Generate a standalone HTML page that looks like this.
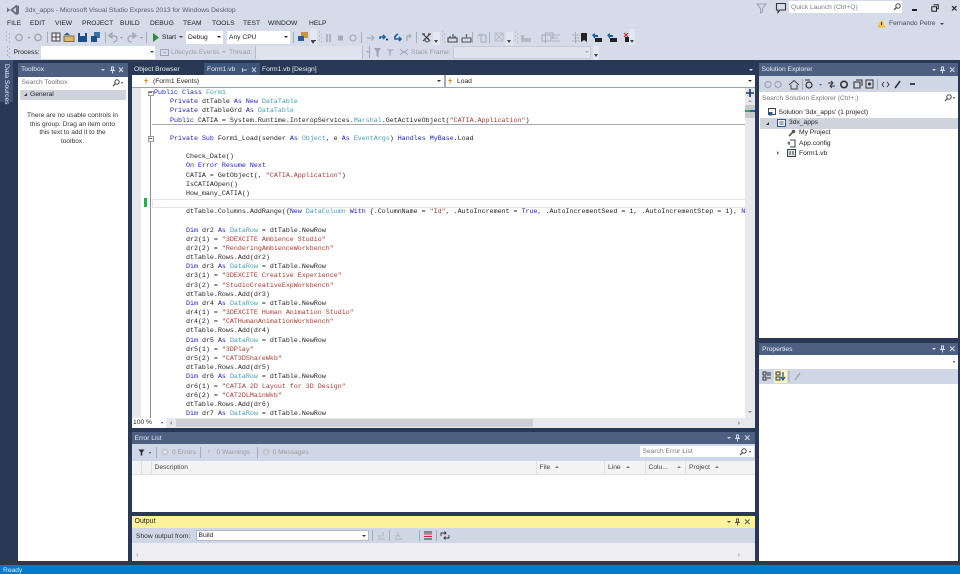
<!DOCTYPE html>
<html><head><meta charset="utf-8"><style>
html,body{margin:0;padding:0;width:960px;height:574px;overflow:hidden;background:#293955}
body{position:relative;font-family:"Liberation Sans",sans-serif;font-size:6.7px;color:#1e1e1e;filter:blur(.3px)}
div,svg{position:absolute}
.t{white-space:nowrap;line-height:10px;margin-top:1px}
.d{margin-top:2px}
.g{color:#9a9ca0}
.h{background:#4d6082}
.w{color:#e8edf5}
.tb{background:#cfd6e5}
.bl{background:#fff}
pre{position:absolute;margin:0;font-family:"Liberation Mono",monospace;font-size:6.67px;line-height:9.17px;color:#222}
pre b{font-weight:normal;color:#1a1acc}
pre i{font-style:normal;color:#3f9fb5}
pre u{text-decoration:none;color:#a83a32}
.sep{width:1px;background:#a5adbd}
</style></head><body>
<!-- top chrome -->
<div style="left:0;top:0;width:960px;height:60px;background:#d6dbe9"></div>
<svg style="left:6px;top:4px" width="14" height="12" viewBox="0 0 14 12"><path d="M1 3.5 L4 6 L1 8.5 Z M10 1 L13 2 V10 L10 11 L4 6 Z M10 3.5 L7 6 L10 8.5 Z" fill="#68707e" fill-rule="evenodd"/></svg>
<div class="t" style="left:25px;top:5px;color:#555b66;font-size:6.7px">3dx_apps - Microsoft Visual Studio Express 2013 for Windows Desktop</div>
<div class="t" style="left:7px;top:18px">FILE</div>
<div class="t" style="left:30px;top:18px">EDIT</div>
<div class="t" style="left:55px;top:18px">VIEW</div>
<div class="t" style="left:82px;top:18px">PROJECT</div>
<div class="t" style="left:120px;top:18px">BUILD</div>
<div class="t" style="left:150px;top:18px">DEBUG</div>
<div class="t" style="left:183px;top:18px">TEAM</div>
<div class="t" style="left:212px;top:18px">TOOLS</div>
<div class="t" style="left:243px;top:18px">TEST</div>
<div class="t" style="left:268px;top:18px">WINDOW</div>
<div class="t" style="left:309px;top:18px">HELP</div>
<!-- quick launch -->
<svg style="left:756px;top:3px" width="12" height="11" viewBox="0 0 12 11"><path d="M1 1H10L6.5 5.5V9L4.5 10V5.5Z" fill="none" stroke="#9aa0ac"/></svg>
<svg style="left:775px;top:2px" width="12" height="12" viewBox="0 0 12 12"><path d="M1.5 1.5H10.5V8H5L3 10.5V8H1.5Z" fill="none" stroke="#33383f" stroke-width="1.1"/></svg>
<div class="bl" style="left:789px;top:1px;width:113px;height:12px"></div>
<div class="t g" style="left:791px;top:2px;color:#7c8088">Quick Launch (Ctrl+Q)</div>
<svg style="left:893px;top:3px" width="8" height="8" viewBox="0 0 8 8"><circle cx="5" cy="3" r="2.2" fill="none" stroke="#444"/><path d="M3.4 4.6L1 7" stroke="#444" stroke-width="1.2"/></svg>
<div style="left:912px;top:9px;width:5px;height:1.5px;background:#222"></div>
<svg style="left:931px;top:4px" width="8" height="8" viewBox="0 0 8 8"><path d="M2.5.8H7.2V4.8H5.5M.8 2.8H5.5V7.2H.8Z" fill="none" stroke="#222"/></svg>
<svg style="left:951px;top:5px" width="7" height="7" viewBox="0 0 7 7"><path d="M1 1L5.5 5.5M5.5 1L1 5.5" stroke="#222" stroke-width="1.2"/></svg>
<svg style="left:877px;top:19px" width="9" height="9" viewBox="0 0 9 9"><path d="M4.5 .5L8.7 8.5H.3Z" fill="#f2c230"/><path d="M4.5 3V6" stroke="#333"/></svg>
<div class="t" style="left:889px;top:18px;color:#444a55">Fernando Petre</div>
<div style="left:940px;top:23px;border:2px solid transparent;border-top:2.5px solid #444"></div>

<!-- toolbar row 1 -->
<svg style="left:5px;top:31px" width="6" height="13" viewBox="0 0 6 13"><path d="M1 1h1M4 3h1M1 5h1M4 7h1M1 9h1M4 11h1" stroke="#8a90a0"/></svg>
<svg style="left:14px;top:32px" width="30" height="11" viewBox="0 0 30 11"><circle cx="5" cy="5.5" r="3.2" fill="none" stroke="#a3a8b2" stroke-width="1.4"/><circle cx="24" cy="5.5" r="3.2" fill="none" stroke="#a3a8b2" stroke-width="1.4"/><path d="M13.5 5h3l-1.5 1.8Z" fill="#999"/></svg>
<div class="sep" style="left:47px;top:32px;height:11px"></div>
<svg style="left:51px;top:31px" width="50" height="12" viewBox="0 0 50 12"><rect x="1" y="2" width="8" height="8" fill="#eee" stroke="#444"/><path d="M5 2V10M1 6H9" stroke="#444"/><path d="M13 5H23V10.5H13Z" fill="#dcb67a" stroke="#8a6a30"/><path d="M16 1.5L19 4H13Z" fill="#1e5f9e"/><path d="M27 2H36V11H27Z" fill="#1e4f8a"/><rect x="29" y="2" width="5" height="3" fill="#dde"/><path d="M40 5H46V11H40Z" fill="#1e4f8a"/><path d="M43 1H49V7H46V5H43Z" fill="#3a6fa8"/></svg>
<div class="sep" style="left:105px;top:32px;height:11px"></div>
<svg style="left:107px;top:32px" width="38" height="11" viewBox="0 0 38 11"><path d="M2 3L5 1V6L2 4H7Q10 4 10 7T6 10" fill="none" stroke="#9ea4b0" stroke-width="1.2"/><path d="M13 5h3l-1.5 1.8Z" fill="#999"/><path d="M29 3L26 1V6L29 4H24Q21 4 21 7T25 10" fill="none" stroke="#9ea4b0" stroke-width="1.2"/><path d="M33 5h3l-1.5 1.8Z" fill="#999"/></svg>
<div class="sep" style="left:146px;top:32px;height:11px"></div>
<svg style="left:153px;top:33px" width="6" height="9" viewBox="0 0 6 9"><path d="M0 0L6 4.5L0 9Z" fill="#2e8b3c"/></svg>
<div class="t" style="left:162px;top:32px">Start</div>
<div style="left:179px;top:36px;border:2px solid transparent;border-top:2.5px solid #444"></div>
<div class="bl" style="left:186px;top:31px;width:37px;height:13px"></div>
<div class="t" style="left:188px;top:32px">Debug</div>
<div style="left:217px;top:36px;border:2px solid transparent;border-top:2.5px solid #222"></div>
<div class="bl" style="left:227px;top:31px;width:63px;height:13px"></div>
<div class="t" style="left:229px;top:32px">Any CPU</div>
<div style="left:284px;top:36px;border:2px solid transparent;border-top:2.5px solid #222"></div>
<div class="sep" style="left:293px;top:32px;height:11px"></div>
<svg style="left:297px;top:31px" width="12" height="12" viewBox="0 0 12 12"><rect x="4" y="1" width="7" height="6" fill="#c8923a"/><rect x="1" y="5" width="6" height="5" fill="#2a5a9a"/></svg>
<div style="left:310px;top:29px;width:7px;height:16px;background:#e4e7f0"></div>
<div style="left:311px;top:40px;width:5px;height:1px;background:#444"></div><div style="left:311px;top:41px;border:2.5px solid transparent;border-top:3px solid #444"></div>
<svg style="left:318px;top:31px" width="5" height="13" viewBox="0 0 5 13"><path d="M1 1h1M3 3h1M1 5h1M3 7h1M1 9h1M3 11h1" stroke="#a0a5b2"/></svg>
<svg style="left:325px;top:33px" width="56" height="10" viewBox="0 0 56 10"><path d="M2 1V9M5 1V9" stroke="#a6abb7" stroke-width="1.6"/><rect x="13" y="2.5" width="5" height="5" fill="#a6abb7"/><circle cx="28" cy="5" r="3" fill="none" stroke="#a6abb7" stroke-width="1.2"/></svg>
<div class="sep" style="left:361px;top:32px;height:11px"></div>
<svg style="left:366px;top:32px" width="46" height="12" viewBox="0 0 46 12"><path d="M1 6H8M5.5 3.5L8 6L5.5 8.5" fill="none" stroke="#a6abb7" stroke-width="1.2"/><path d="M14 7V5H19M17 3L19 5L17 7" fill="none" stroke="#1e5f9e" stroke-width="1.6"/><circle cx="21" cy="7.5" r="1" fill="#222"/><path d="M32 2Q28 4 29 7H35M33 5L35 7L33 9" fill="none" stroke="#1e5f9e" stroke-width="1.6"/><path d="M41 9V4H45M43 2L45 4L43 6" fill="none" stroke="#a6abb7" stroke-width="1.2"/></svg>
<div class="sep" style="left:416px;top:32px;height:11px"></div>
<svg style="left:421px;top:32px" width="11" height="11" viewBox="0 0 11 11"><path d="M1 2H4M7 2H10M2 2L9 9M9 2L2 9" stroke="#444" stroke-width="1.2"/><circle cx="6" cy="8" r="2" fill="none" stroke="#444"/></svg>
<div style="left:433px;top:32px;width:7px;height:13px;background:#e4e7f0"></div><div style="left:434px;top:40px;border:2.5px solid transparent;border-top:3px solid #444"></div>
<svg style="left:441px;top:31px" width="5" height="13" viewBox="0 0 5 13"><path d="M1 1h1M3 3h1M1 5h1M3 7h1M1 9h1M3 11h1" stroke="#a0a5b2"/></svg>
<svg style="left:447px;top:32px" width="26" height="11" viewBox="0 0 26 11"><path d="M1 10V6H10V10ZM3 6V4M6 6V2M8 6V4" fill="none" stroke="#444" stroke-width="1.1"/><path d="M15 10V6H24V10ZM19.5 6V2" fill="none" stroke="#555" stroke-width="1.1"/></svg>
<div class="sep" style="left:472px;top:32px;height:11px"></div>
<svg style="left:477px;top:32px" width="11" height="11" viewBox="0 0 11 11"><path d="M4 3H9V10H4ZM1 4L3 2L5 4" fill="none" stroke="#a6abb7"/></svg>
<div class="sep" style="left:489px;top:32px;height:11px"></div>
<svg style="left:494px;top:32px" width="11" height="11" viewBox="0 0 11 11"><path d="M1 1H9V9H1ZM1 1L9 9M9 1L1 9" fill="none" stroke="#b5b9c4"/></svg>
<div style="left:506px;top:32px;width:7px;height:13px;background:#e4e7f0"></div><div style="left:507px;top:40px;border:2.5px solid transparent;border-top:3px solid #444"></div>
<svg style="left:514px;top:31px" width="5" height="13" viewBox="0 0 5 13"><path d="M1 1h1M3 3h1M1 5h1M3 7h1M1 9h1M3 11h1" stroke="#a0a5b2"/></svg>
<svg style="left:520px;top:32px" width="42" height="11" viewBox="0 0 42 11"><path d="M1 3H4V10H1ZM4 6H11V10H4Z" fill="#b4bac6"/><path d="M22 3H31V9H22ZM25 1H33V7" fill="none" stroke="#a6abb7"/></svg>
<div class="sep" style="left:545px;top:32px;height:11px"></div>
<svg style="left:550px;top:32px" width="32" height="11" viewBox="0 0 32 11"><path d="M2 3H10M2 6H8M2 9H10M22 3H30M24 6H30M22 9H30" stroke="#b0b5c0"/></svg>
<div class="sep" style="left:575px;top:32px;height:11px"></div>
<svg style="left:580px;top:32px" width="60" height="11" viewBox="0 0 60 11"><path d="M1 1H7V10L4 8L1 10Z" fill="#222"/><path d="M15 6H22V10H15Z" fill="#222"/><path d="M12 3L15 1V3H18V5H15V7Z" fill="#1e5f9e"/><path d="M30 6H37V10H30Z" fill="#222"/><path d="M27 3L30 1V3H33V5H30V7Z" fill="#1e5f9e"/><path d="M45 5H52V10H45Z" fill="#222"/><path d="M44 1L48 5M48 1L44 5" stroke="#c0302a" stroke-width="1.2"/></svg>
<div style="left:629px;top:29px;width:6px;height:16px;background:#e4e7f0"></div><div style="left:630px;top:40px;border:2.5px solid transparent;border-top:3px solid #444"></div>

<!-- toolbar row 2 -->
<svg style="left:6px;top:46px" width="5" height="13" viewBox="0 0 5 13"><path d="M1 1h1M3 3h1M1 5h1M3 7h1M1 9h1M3 11h1" stroke="#8a90a0"/></svg>
<div class="t d" style="left:13.5px;top:46px">Process:</div>
<div class="bl" style="left:41px;top:46px;width:114px;height:13px"></div>
<div style="left:150px;top:51px;border:2px solid transparent;border-top:2.5px solid #444"></div>
<svg style="left:160px;top:48px" width="9" height="9" viewBox="0 0 9 9"><path d="M.5 1.5H8.5V7.5H.5ZM3 4.5H6" fill="none" stroke="#9ea4b0"/></svg>
<div class="t d g" style="left:171px;top:46px">Lifecycle Events</div>
<div style="left:222px;top:51px;border:2px solid transparent;border-top:2.5px solid #a6abb7"></div>
<div class="t d g" style="left:229px;top:46px">Thread:</div>
<div style="left:255px;top:46px;width:108px;height:13px;background:#dfe3ed;border-left:1px solid #b6bcc9;border-right:1px solid #b6bcc9;box-sizing:border-box"></div>
<div style="left:366px;top:51px;border:2px solid transparent;border-top:2.5px solid #a6abb7"></div>
<div class="sep" style="left:369px;top:46px;height:12px"></div>
<svg style="left:373px;top:47px" width="40" height="11" viewBox="0 0 40 11"><path d="M1 1H8L5.5 5V10L3.5 9V5Z" fill="#9ea4b0"/><path d="M14 2H21L18 5V8L16 9V5Z" fill="#b5bac5"/><path d="M27 2L31 6L35 2M27 8L31 4L35 8" fill="none" stroke="#a6abb7"/></svg>
<div class="t d g" style="left:411px;top:46px">Stack Frame:</div>
<div style="left:453px;top:46px;width:138px;height:13px;background:#dfe3ed;border:1px solid #c6cbd6;box-sizing:border-box"></div>
<div style="left:585px;top:51px;border:2px solid transparent;border-top:2.5px solid #a6abb7"></div>
<div style="left:593px;top:46px;width:6px;height:14px;background:#e4e7f0"></div><div style="left:594px;top:54px;border:2.5px solid transparent;border-top:3px solid #444"></div>

<!-- left tab -->
<div style="left:0;top:60px;width:13px;height:42px;background:#3e5072"></div>
<div class="w" style="left:3px;top:64px;white-space:nowrap;writing-mode:vertical-rl;font-size:6.7px;line-height:7px">Data Sources</div>

<!-- Toolbox -->
<div class="bl" style="left:18px;top:63px;width:109.5px;height:498px"></div>
<div class="h" style="left:18px;top:63px;width:109.5px;height:14px"></div>
<div class="t w" style="left:21px;top:64px">Toolbox</div>
<div style="left:101px;top:69px;border:2px solid transparent;border-top:2.5px solid #d4dbe8"></div>
<svg style="left:109px;top:66px" width="16" height="8" viewBox="0 0 16 8"><path d="M2 1H5M2.5 1V4H4.5V1M1 4.5H6M3.5 4.5V7.5M10 1.5L14 6M14 1.5L10 6" fill="none" stroke="#d4dbe8"/></svg>
<div class="t g" style="left:21.5px;top:77px;color:#777">Search Toolbox</div>
<svg style="left:112px;top:79px" width="8" height="8" viewBox="0 0 8 8"><circle cx="5" cy="3" r="2.2" fill="none" stroke="#444"/><path d="M3.4 4.6L1 7" stroke="#444" stroke-width="1.2"/></svg>
<div style="left:121px;top:82px;border:1.5px solid transparent;border-top:2px solid #444"></div>
<div style="left:20px;top:90px;width:106px;height:10px;background:#cfd3de"></div>
<div style="left:24px;top:93px;border-left:3px solid transparent;border-bottom:3px solid #333"></div>
<div class="t" style="left:30px;top:89px">General</div>
<div style="left:18px;top:112px;width:109px;text-align:center;line-height:8.7px;color:#333;font-size:6.6px;white-space:nowrap">There are no usable controls in<br>this group. Drag an item onto<br>this text to add it to the<br>toolbox.</div>

<!-- Editor -->
<div class="t w" style="left:134px;top:64px">Object Browser</div>
<div style="left:204px;top:63px;width:56px;height:13px;background:#3e5578"></div>
<div class="t w" style="left:207px;top:64px">Form1.vb</div>
<svg style="left:240px;top:66px" width="18" height="8" viewBox="0 0 18 8"><path d="M2 4H7M2.5 2V6M12 1.5L16 6M16 1.5L12 6" fill="none" stroke="#c5cedd"/></svg>
<div class="t w" style="left:262px;top:64px">Form1.vb [Design]</div>
<div style="left:749px;top:69px;border:2px solid transparent;border-top:2.5px solid #d4dbe8"></div>
<div class="bl" style="left:132px;top:75px;width:623px;height:343px"></div>
<div style="left:132px;top:87px;width:623px;height:1px;background:#9aa3b3"></div>
<div style="left:444px;top:75px;width:2px;height:13px;background:#a4abb9"></div>
<svg style="left:143px;top:77px" width="6" height="8" viewBox="0 0 6 8"><path d="M4 0L1 4H3L2 8L5 3H3Z" fill="#d98a1e"/></svg>
<div class="t" style="left:153px;top:76px">(Form1 Events)</div>
<div style="left:437px;top:80px;border:2px solid transparent;border-top:2.5px solid #333"></div>
<svg style="left:447px;top:77px" width="6" height="8" viewBox="0 0 6 8"><path d="M4 0L1 4H3L2 8L5 3H3Z" fill="#d98a1e"/></svg>
<div class="t" style="left:457px;top:76px">Load</div>
<div style="left:748px;top:80px;border:2px solid transparent;border-top:2.5px solid #333"></div>
<div style="left:132px;top:88px;width:9px;height:330px;background:#e6e7e8"></div>
<div style="left:143.5px;top:198px;width:3px;height:9px;background:#22b14c"></div>
<div style="left:150px;top:95px;width:1px;height:323px;background:#8c8c8c"></div>
<div style="left:148px;top:90.5px;width:3.5px;height:3.5px;border:1px solid #999;background:#fff"></div>
<div style="left:149px;top:92px;width:3px;height:1px;background:#666"></div>
<div style="left:148px;top:136px;width:3.5px;height:3.5px;border:1px solid #999;background:#fff"></div>
<div style="left:149px;top:138px;width:3px;height:1px;background:#666"></div>
<div style="left:152px;top:123.5px;width:593px;height:1px;background:#aaa"></div>
<div style="left:152px;top:199px;width:593px;height:7px;border:1px solid #e6e6e6"></div>
<pre style="left:154px;top:89px;width:591px;height:329px;overflow:hidden"><b>Public Class</b> <i>Form1</i>
    <b>Private</b> dtTable <b>As New</b> <i>DataTable</i>
    <b>Private</b> dtTableGrd <b>As</b> <i>DataTable</i>
    <b>Public</b> CATIA = System.Runtime.InteropServices.<i>Marshal</i>.GetActiveObject(<u>"CATIA.Application"</u>)

    <b>Private Sub</b> Form1_Load(sender <b>As</b> <i>Object</i>, e <b>As</b> <i>EventArgs</i>) <b>Handles MyBase</b>.Load

        Check_Date()
        <b>On Error Resume Next</b>
        CATIA = GetObject(, <u>"CATIA.Application"</u>)
        IsCATIAOpen()
        How_many_CATIA()

        dtTable.Columns.AddRange({<b>New</b> <i>DataColumn</i> <b>With</b> {.ColumnName = <u>"Id"</u>, .AutoIncrement = <b>True</b>, .AutoIncrementSeed = 1, .AutoIncrementStep = 1}, <b>New</b> <i>DataColumn</i>})

        <b>Dim</b> dr2 <b>As</b> <i>DataRow</i> = dtTable.NewRow
        dr2(1) = <u>"3DEXCITE Ambience Studio"</u>
        dr2(2) = <u>"RenderingAmbienceWorkbench"</u>
        dtTable.Rows.Add(dr2)
        <b>Dim</b> dr3 <b>As</b> <i>DataRow</i> = dtTable.NewRow
        dr3(1) = <u>"3DEXCITE Creative Experience"</u>
        dr3(2) = <u>"StudioCreativeExpWorkbench"</u>
        dtTable.Rows.Add(dr3)
        <b>Dim</b> dr4 <b>As</b> <i>DataRow</i> = dtTable.NewRow
        dr4(1) = <u>"3DEXCITE Human Animation Studio"</u>
        dr4(2) = <u>"CATHumanAnimationWorkbench"</u>
        dtTable.Rows.Add(dr4)
        <b>Dim</b> dr5 <b>As</b> <i>DataRow</i> = dtTable.NewRow
        dr5(1) = <u>"3DPlay"</u>
        dr5(2) = <u>"CAT3DShareWkb"</u>
        dtTable.Rows.Add(dr5)
        <b>Dim</b> dr6 <b>As</b> <i>DataRow</i> = dtTable.NewRow
        dr6(1) = <u>"CATIA 2D Layout for 3D Design"</u>
        dr6(2) = <u>"CAT2DLMainWkb"</u>
        dtTable.Rows.Add(dr6)
        <b>Dim</b> dr7 <b>As</b> <i>DataRow</i> = dtTable.NewRow</pre>
<!-- vscroll -->
<div style="left:745px;top:88px;width:10px;height:330px;background:#e8e8ec"></div>
<div style="left:745px;top:88px;width:10px;height:9px;background:#dfe3ec"></div>
<svg style="left:746px;top:89px" width="8" height="8" viewBox="0 0 8 8"><path d="M4 0V8M0 4H8" stroke="#1a3a6e" stroke-width="1.6"/></svg>
<div style="left:748px;top:100px;border:2px solid transparent;border-top:0;border-bottom:2.5px solid #999"></div>
<div style="left:745px;top:105px;width:10px;height:13px;background:#c8c8cc"></div>
<div style="left:745px;top:110px;width:5px;height:1.5px;background:#22b14c"></div>
<div style="left:750px;top:110px;width:5px;height:1.5px;background:#2a5fb0"></div>
<div style="left:748px;top:411px;border:2px solid transparent;border-bottom:0;border-top:2.5px solid #888"></div>
<!-- hscroll -->
<div style="left:132px;top:418px;width:623px;height:10px;background:#e8e8ec"></div>
<div class="bl" style="left:132px;top:418px;width:34px;height:10px"></div>
<div class="t" style="left:133px;top:417px">100 %</div>
<div style="left:161px;top:422px;border:1.5px solid transparent;border-top:2.5px solid #444"></div>
<div style="left:170px;top:421px;border:2px solid transparent;border-left:0;border-right:2.5px solid #999"></div>
<div style="left:176px;top:419px;width:357px;height:8px;background:#d0d0d4"></div>
<div style="left:738px;top:421px;border:2px solid transparent;border-right:0;border-left:2.5px solid #999"></div>

<!-- Error list -->
<div class="h" style="left:132px;top:432px;width:623px;height:12px"></div>
<div class="t d w" style="left:134.5px;top:432px">Error List</div>
<div style="left:727px;top:437px;border:2px solid transparent;border-top:2.5px solid #d4dbe8"></div>
<svg style="left:734px;top:434px" width="18" height="8" viewBox="0 0 18 8"><path d="M2 1H5M2.5 1V4H4.5V1M1 4.5H6M3.5 4.5V7.5M11 1.5L15.5 6M15.5 1.5L11 6" fill="none" stroke="#d4dbe8"/></svg>
<div class="tb" style="left:132px;top:444px;width:623px;height:17px"></div>
<svg style="left:138px;top:449px" width="7" height="7" viewBox="0 0 7 7"><path d="M.5 .5H6.5L4.3 3.5V6.5H2.7V3.5Z" fill="#333"/></svg>
<div style="left:149px;top:452px;border:1.5px solid transparent;border-top:2px solid #444"></div>
<div class="sep" style="left:156px;top:447px;height:11px"></div>
<svg style="left:161px;top:448px" width="8" height="8" viewBox="0 0 8 8"><circle cx="4" cy="4" r="3.4" fill="#c0c4ce"/><path d="M2.5 2.5L5.5 5.5M5.5 2.5L2.5 5.5" stroke="#eee"/></svg>
<div class="t g" style="left:172px;top:447px">0 Errors</div>
<div class="sep" style="left:200px;top:447px;height:11px"></div>
<div class="t g" style="left:208px;top:447px">!</div>
<div class="t g" style="left:216.5px;top:447px">0 Warnings</div>
<div class="sep" style="left:257px;top:447px;height:11px"></div>
<svg style="left:262px;top:448px" width="8" height="8" viewBox="0 0 8 8"><circle cx="4" cy="4" r="3.4" fill="#c0c4ce"/><path d="M4 2.5V6" stroke="#eee"/></svg>
<div class="t g" style="left:272.5px;top:447px">0 Messages</div>
<div class="bl" style="left:640px;top:446px;width:114px;height:11px"></div>
<div class="t g" style="left:642.5px;top:446px;color:#777">Search Error List</div>
<svg style="left:739px;top:448px" width="8" height="8" viewBox="0 0 8 8"><circle cx="5" cy="3" r="2.2" fill="none" stroke="#444"/><path d="M3.4 4.6L1 7" stroke="#444" stroke-width="1.2"/></svg>
<div style="left:749px;top:451px;border:1.5px solid transparent;border-top:2px solid #444"></div>
<div style="left:132px;top:461px;width:623px;height:13.5px;background:#f3f3f4;border-bottom:1px solid #e2e2e2;box-sizing:border-box"></div>
<div style="left:141px;top:461px;width:1px;height:13px;background:#e0e0e0"></div>
<div style="left:151px;top:461px;width:1px;height:13px;background:#e0e0e0"></div>
<div style="left:536px;top:461px;width:1px;height:13px;background:#e0e0e0"></div>
<div style="left:604px;top:461px;width:1px;height:13px;background:#e0e0e0"></div>
<div style="left:645px;top:461px;width:1px;height:13px;background:#e0e0e0"></div>
<div style="left:685px;top:461px;width:1px;height:13px;background:#e0e0e0"></div>
<div class="t" style="left:154.5px;top:462px;color:#444">Description</div>
<div class="t" style="left:539.5px;top:462px;color:#444">File</div>
<div style="left:555px;top:466px;border:2.5px solid transparent;border-top:0;border-bottom:2.5px solid #777"></div>
<div class="t" style="left:608px;top:462px;color:#444">Line</div>
<div style="left:626px;top:466px;border:2.5px solid transparent;border-top:0;border-bottom:2.5px solid #777"></div>
<div class="t" style="left:648.5px;top:462px;color:#444">Colu...</div>
<div style="left:677px;top:466px;border:2.5px solid transparent;border-top:0;border-bottom:2.5px solid #777"></div>
<div class="t" style="left:689px;top:462px;color:#444">Project</div>
<div style="left:715px;top:466px;border:2.5px solid transparent;border-top:0;border-bottom:2.5px solid #777"></div>
<div class="bl" style="left:132px;top:474.5px;width:623px;height:37px"></div>

<!-- Output -->
<div style="left:132px;top:516px;width:623px;height:12px;background:#fff29d"></div>
<div class="t" style="left:134.5px;top:516px;font-size:7px">Output</div>
<div style="left:727px;top:521px;border:2px solid transparent;border-top:2.5px solid #555"></div>
<svg style="left:734px;top:518px" width="18" height="8" viewBox="0 0 18 8"><path d="M2 1H5M2.5 1V4H4.5V1M1 4.5H6M3.5 4.5V7.5M11 1.5L15.5 6M15.5 1.5L11 6" fill="none" stroke="#555"/></svg>
<div class="tb" style="left:132px;top:528px;width:623px;height:15px"></div>
<div class="t d" style="left:136px;top:530px;color:#333">Show output from:</div>
<div class="bl" style="left:196px;top:530px;width:173px;height:11px;border:1px solid #b5bac6;box-sizing:border-box"></div>
<div class="t" style="left:198.5px;top:530px">Build</div>
<div style="left:362px;top:535px;border:2px solid transparent;border-top:2.5px solid #333"></div>
<div class="sep" style="left:372px;top:530px;height:11px"></div>
<div class="sep" style="left:389px;top:530px;height:11px"></div>
<svg style="left:377px;top:531px" width="28" height="10" viewBox="0 0 28 10"><path d="M1 8H8M1 5H4M6 1V5" stroke="#aeb3bf"/><path d="M18 8H26M18 5H23M21 1V5" stroke="#aeb3bf"/></svg>
<div class="sep" style="left:419px;top:530px;height:11px"></div>
<svg style="left:423px;top:530px" width="10" height="11" viewBox="0 0 10 11"><path d="M1 2H9M1 9H9" stroke="#333"/><path d="M1 4H9M1 6.5H9" stroke="#c0302a"/></svg>
<div class="sep" style="left:436px;top:530px;height:11px"></div>
<svg style="left:440px;top:531px" width="10" height="9" viewBox="0 0 10 9"><path d="M1 5V2H6M9 4V7H4M4.5 .5L6 2L4.5 3.5M5.5 5.5L4 7L5.5 8.5" fill="none" stroke="#333" stroke-width=".9"/></svg>
<div style="left:132px;top:543px;width:623px;height:18px;background:#eeeef2"></div>
<div style="left:136px;top:553px;border:2px solid transparent;border-left:0;border-right:2.5px solid #bbb"></div>
<div style="left:738px;top:553px;border:2px solid transparent;border-right:0;border-left:2.5px solid #bbb"></div>

<!-- Solution Explorer -->
<div class="bl" style="left:759px;top:63px;width:199px;height:275px"></div>
<div class="h" style="left:759px;top:63px;width:199px;height:13px"></div>
<div class="t w" style="left:761.5px;top:64px">Solution Explorer</div>
<div style="left:932px;top:69px;border:2px solid transparent;border-top:2.5px solid #d4dbe8"></div>
<svg style="left:939px;top:66px" width="18" height="8" viewBox="0 0 18 8"><path d="M2 1H5M2.5 1V4H4.5V1M1 4.5H6M3.5 4.5V7.5M11 1.5L15.5 6M15.5 1.5L11 6" fill="none" stroke="#d4dbe8"/></svg>
<div class="tb" style="left:759px;top:76px;width:199px;height:16px"></div>
<svg style="left:763px;top:79px" width="155" height="11" viewBox="0 0 155 11"><circle cx="5" cy="5.5" r="3" fill="none" stroke="#a3a8b2" stroke-width="1.3"/><circle cx="15" cy="5.5" r="3" fill="none" stroke="#a3a8b2" stroke-width="1.3"/><path d="M26 6L31 1.5L36 6M28 6V10H34V6" fill="none" stroke="#444"/><path d="M39.5 0V11" stroke="#a5adbd"/><circle cx="46" cy="6" r="3" fill="none" stroke="#333" stroke-width="1.2"/><path d="M42 1H47" stroke="#333"/><path d="M56 5h3l-1.5 1.8Z" fill="#666"/><path d="M65 4H70M68 2L70 4L68 6M72 7H67M69 5L67 7L69 9" fill="none" stroke="#333"/><circle cx="81" cy="5.5" r="3.2" fill="none" stroke="#333" stroke-width="1.6"/><path d="M91 3H97V9H91ZM93 1H99V7" fill="none" stroke="#333" stroke-width="1.1"/><path d="M103 1H110V9H103Z" fill="none" stroke="#333"/><circle cx="106.5" cy="5" r="1.5" fill="#333"/><path d="M114.5 0V11" stroke="#a5adbd"/><path d="M121 3L119 5.5L121 8M124 3L126 5.5L124 8" fill="none" stroke="#333" stroke-width=".9"/><path d="M132 9L135 5M135 5L137 2" stroke="#333" stroke-width="1.6"/></svg>
<div style="left:910px;top:83px;width:5px;height:1.5px;background:#444"></div>
<div class="t g" style="left:762px;top:92.5px;color:#777">Search Solution Explorer (Ctrl+;)</div>
<svg style="left:944px;top:94px" width="8" height="8" viewBox="0 0 8 8"><circle cx="5" cy="3" r="2.2" fill="none" stroke="#444"/><path d="M3.4 4.6L1 7" stroke="#444" stroke-width="1.2"/></svg>
<div style="left:953px;top:97px;border:1.5px solid transparent;border-top:2px solid #444"></div>
<svg style="left:768px;top:108px" width="8" height="8" viewBox="0 0 8 8"><rect x=".5" y=".5" width="7" height="6" fill="none" stroke="#444"/><rect x="1" y="4" width="3.5" height="3.5" fill="#2a5a9a"/></svg>
<div class="t d" style="left:778.5px;top:106px;color:#222">Solution '3dx_apps' (1 project)</div>
<div style="left:760px;top:118px;width:198px;height:10.5px;background:#cfd3de"></div>
<div style="left:766px;top:122px;border-left:3px solid transparent;border-bottom:3px solid #333"></div>
<svg style="left:777px;top:119px" width="9" height="8" viewBox="0 0 9 8"><rect x=".5" y=".5" width="8" height="7" fill="#eef" stroke="#2a5a9a"/><path d="M2.5 3H6.5M2.5 5H6.5" stroke="#666"/></svg>
<div class="t" style="left:789px;top:117px;color:#222">3dx_apps</div>
<svg style="left:788px;top:129px" width="8" height="8" viewBox="0 0 8 8"><path d="M1 7L5 3" stroke="#555" stroke-width="1.6"/><circle cx="5.5" cy="2.5" r="1.8" fill="#555"/></svg>
<div class="t" style="left:799px;top:127px;color:#222">My Project</div>
<svg style="left:787px;top:139px" width="9" height="9" viewBox="0 0 9 9"><path d="M3 1H8V8H3" fill="none" stroke="#444"/><path d="M.5 4H3M2 2.5V6" stroke="#444"/></svg>
<div class="t d" style="left:799px;top:137px;color:#222">App.config</div>
<div style="left:777px;top:151px;border:2.5px solid transparent;border-right:0;border-left:2.5px solid #666"></div>
<svg style="left:787px;top:149px" width="9" height="8" viewBox="0 0 9 8"><rect x=".5" y=".5" width="8" height="7" fill="#dde3ee" stroke="#444"/><path d="M2 3H4M2 5H4M5 3H7M5 5H7" stroke="#444"/></svg>
<div class="t" style="left:799px;top:148px;color:#222">Form1.vb</div>

<!-- Properties -->
<div class="bl" style="left:759px;top:343px;width:199px;height:218px"></div>
<div class="h" style="left:759px;top:343px;width:199px;height:12px"></div>
<div class="t d" style="left:762px;top:343px;color:#e8edf5">Properties</div>
<div style="left:932px;top:348px;border:2px solid transparent;border-top:2.5px solid #d4dbe8"></div>
<svg style="left:939px;top:345px" width="18" height="8" viewBox="0 0 18 8"><path d="M2 1H5M2.5 1V4H4.5V1M1 4.5H6M3.5 4.5V7.5M11 1.5L15.5 6M15.5 1.5L11 6" fill="none" stroke="#d4dbe8"/></svg>
<div style="left:953px;top:361px;border:1.5px solid transparent;border-top:2px solid #333"></div>
<div class="tb" style="left:759px;top:369px;width:199px;height:14.5px"></div>
<div style="left:774px;top:370px;width:13px;height:13px;background:#fdf4bf"></div>
<svg style="left:762px;top:371px" width="46" height="11" viewBox="0 0 46 11"><path d="M1 1H4V4H1ZM1 6H4V9H1Z" fill="none" stroke="#333"/><path d="M5 2H9M5 4H9M5 7H9" stroke="#333"/><path d="M14 1H18V4H14ZM14 6H18V9H14Z" fill="none" stroke="#333"/><path d="M21 1V8M19 6L21 9L23 6" fill="none" stroke="#1e5f9e" stroke-width="1.3"/><path d="M27 0V11" stroke="#a5adbd"/><path d="M33 9L36 5M36 5L38 2" stroke="#a3a8b2" stroke-width="1.6"/></svg>

<!-- status -->
<div style="left:0;top:565px;width:960px;height:9px;background:#007acc;overflow:hidden"></div>
<div class="t" style="left:3px;top:565px;color:#dff0fa">Ready</div>
</body></html>
